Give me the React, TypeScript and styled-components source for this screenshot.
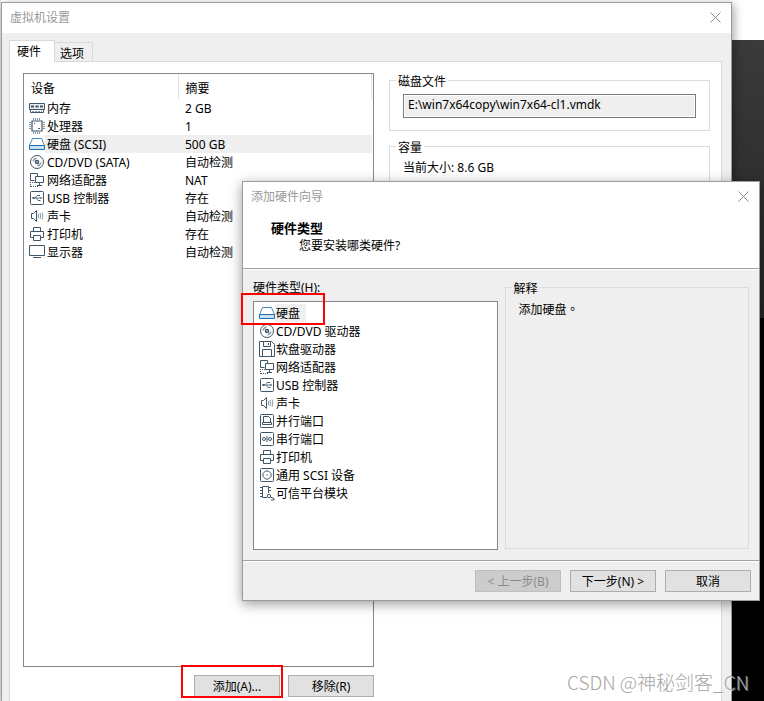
import React, { ReactNode } from "react";
import styled, { createGlobalStyle } from "styled-components";

const ink = "#3f5666";
const steel = "#8597a3";

const GlobalStyle = createGlobalStyle`
  *, *::before, *::after { box-sizing: border-box; }
  body { margin: 0; background: #fff; }
  body, button, input, table {
    font-family: "Noto Sans", "Noto Sans CJK SC", sans-serif;
    font-size: 12px;
    line-height: 18px;
    color: #000;
  }
`;

const Desktop = styled.main`
  position: relative;
  display: flex;
  min-height: 100vh;
  padding: 2px 32px 0 1px;
  overflow: hidden;
  background:
    linear-gradient(#e4e4e4, #e4e4e4) 0 0 / 1px 100% no-repeat,
    linear-gradient(#3a3a3a, #262626) 0 40px / 100% 278px no-repeat,
    linear-gradient(#fff, #fff) 0 0 / 100% 40px no-repeat,
    #000;
`;

const SettingsWindow = styled.section`
  flex: 1;
  display: flex;
  flex-direction: column;
  border: 1px solid #9c9c9c;
  border-bottom: 0;
  background: #efefef;
  box-shadow: 2px 2px 9px rgba(0, 0, 0, 0.35);
`;

const TitleBar = styled.header`
  display: flex;
  align-items: center;
  justify-content: space-between;
  height: 30px;
  padding: 0 10px 2px 8px;
  background: #fff;
  color: #999;
`;

const WindowTitle = styled.h1`
  margin: 0;
  padding-top: 2px;
  font-size: 12px;
  font-weight: 400;
`;

const CloseButton = styled.button`
  display: flex;
  padding: 0;
  border: 0;
  background: none;
  color: #8a8a8a;
`;

const SettingsBody = styled.div`
  flex: 1;
  display: flex;
  flex-direction: column;
  padding: 7px 9px 0 7px;
`;

const TabList = styled.div`
  display: flex;
  align-items: flex-end;
  height: 21px;
`;

const Tab = styled.button<{ $active?: boolean }>`
  position: relative;
  height: ${(p) => (p.$active ? 22 : 19)}px;
  margin-bottom: ${(p) => (p.$active ? -1 : 0)}px;
  padding: ${(p) => (p.$active ? "0 13px 0 7px" : "2px 8px 0 5px")};
  border: 1px solid #d9d9d9;
  border-bottom: 0;
  border-left-width: ${(p) => (p.$active ? 1 : 0)}px;
  background: ${(p) => (p.$active ? "#fff" : "#efefef")};
`;

const TabPanel = styled.div`
  flex: 1;
  display: flex;
  gap: 15px;
  padding: 11px 11px 4px 13px;
  border: 1px solid #d9d9d9;
  border-bottom: 0;
  background: #fff;
`;

const DeviceColumn = styled.div`
  display: flex;
  flex-direction: column;
  gap: 8px;
  width: 351px;
`;

const DeviceFrame = styled.div`
  flex: 1;
  padding-right: 1px;
  border: 1px solid #828790;
`;

const DeviceTable = styled.table`
  width: 100%;
  border-collapse: collapse;
  table-layout: fixed;
`;

const HeadCell = styled.th<{ $width?: number }>`
  width: ${(p) => (p.$width ? `${p.$width}px` : "auto")};
  height: 25px;
  padding: 4px 7px 0;
  border-right: 1px solid #e2e2e2;
  font-weight: 400;
  text-align: left;
`;

const Cell = styled.td<{ $selected?: boolean }>`
  height: 18px;
  padding: 2px 0 0 7px;
  line-height: 16px;
  background: ${(p) => (p.$selected ? "#efefef" : "transparent")};
`;

const NameCell = styled.td`
  height: 18px;
  padding: 0 0 0 5px;
`;

const IconLabel = styled.div`
  display: flex;
  align-items: center;
  height: 18px;
`;

const DeviceLabel = styled.span<{ $selected?: boolean }>`
  flex: 1;
  padding: 2px 0 0 2px;
  line-height: 16px;
  background: ${(p) => (p.$selected ? "#efefef" : "transparent")};
`;

const Glyph = styled.svg`
  flex: none;
  display: block;
  fill: none;
`;

const ButtonRow = styled.div`
  display: flex;
  justify-content: flex-end;
  gap: 8px;
`;

const PushButton = styled.button`
  width: 86px;
  height: 22px;
  padding: 2px 0 0;
  border: 1px solid #adadad;
  background: #e1e1e1;
  line-height: 18px;
  &:disabled {
    border-color: #bfbfbf;
    background: #ccc;
    color: #8a8a8a;
  }
`;

const MarkedArea = styled.div`
  position: relative;
  display: flex;
`;

const Highlight = styled.span<{ $left: number; $top: number; $width: number; $height: number }>`
  position: absolute;
  z-index: 2;
  left: ${(p) => p.$left}px;
  top: ${(p) => p.$top}px;
  width: ${(p) => p.$width}px;
  height: ${(p) => p.$height}px;
  border: 2px solid #f00;
  pointer-events: none;
`;

const DetailColumn = styled.div`
  flex: 1;
  display: flex;
  flex-direction: column;
  gap: 8px;
  min-width: 0;
`;

const Group = styled.fieldset<{ $height?: number }>`
  min-width: 0;
  height: ${(p) => (p.$height ? `${p.$height}px` : "auto")};
  margin: 0;
  padding: 0;
  border: 1px solid #dcdcdc;
`;

const GroupTitle = styled.legend`
  height: 15px;
  margin-left: 6px;
  padding: 0 2px;
  line-height: 17px;
`;

const GroupContent = styled.div`
  padding: 5px 13px 0;
`;

const FileInput = styled.input`
  display: block;
  width: 100%;
  height: 24px;
  margin-top: 1px;
  padding: 0 4px 3px;
  border: 1px solid #7a7a7a;
  outline: 1px solid #fff;
  outline-offset: -2px;
  border-radius: 0;
  background: #efefef;
`;

const Wizard = styled.section`
  position: absolute;
  top: 181px;
  left: 242px;
  right: 4px;
  border: 1px solid #9c9c9c;
  background: #efefef;
  box-shadow: 0 3px 12px rgba(0, 0, 0, 0.4);
`;

const WizardHeader = styled.div`
  padding: 7px 28px 13px;
  border-bottom: 1px solid #a0a0a0;
  background: #fff;
`;

const WizardHeading = styled.h2`
  margin: 0;
  font-size: 13px;
  font-weight: 700;
  line-height: 18px;
`;

const WizardHint = styled.p`
  margin: 0;
  padding-left: 28px;
`;

const WizardBody = styled.div`
  display: grid;
  grid-template-columns: 1fr 1fr;
  gap: 7px;
  padding: 9px 10px 10px;
  border-top: 1px solid #fff;
  border-bottom: 1px solid #a0a0a0;
`;

const TypeColumn = styled.div`
  display: flex;
  flex-direction: column;
  gap: 4px;
`;

const TypeList = styled.ul`
  height: 249px;
  margin: 0;
  padding: 2px 5px;
  border: 1px solid #828790;
  background: #fff;
  list-style: none;
`;

const TypeItem = styled.li`
  display: flex;
  align-items: center;
  height: 18px;
`;

const TypeLabel = styled.span<{ $selected?: boolean }>`
  padding: 2px 6px 0 1px;
  line-height: 16px;
  background: ${(p) => (p.$selected ? "#efefef" : "transparent")};
`;

const ExplainColumn = styled.div`
  display: grid;
  padding: 1px 0;
`;

const CenteredStop = styled.span`
  font-family: "Noto Sans CJK TC", sans-serif;
`;

const WizardFooter = styled.footer`
  display: flex;
  justify-content: flex-end;
  gap: 9px;
  padding: 8px;
  border-top: 1px solid #fff;
`;

const Watermark = styled.p`
  position: absolute;
  z-index: 3;
  right: 15px;
  bottom: 5px;
  margin: 0;
  font-family: "Noto Sans CJK SC", sans-serif;
  font-size: 19px;
  font-weight: 300;
  line-height: 28px;
  color: #a6a6a6;
  text-shadow: 1px 1px 0 rgba(255, 255, 255, 0.5);
`;

type IconName =
  | "memory" | "cpu" | "disk" | "disc" | "network" | "usb" | "sound" | "printer"
  | "display" | "floppy" | "parallel" | "serial" | "scsi" | "tpm";

const drawings: Record<IconName, ReactNode> = {
  memory: (
    <>
      <path d="M.5 3.5h15v6H.5z" stroke={ink} fill="#e6ebee" />
      <path d="M1.5 9.500v3h13v-3" stroke={ink} />
      <path d="M2 6.500h3M6.500 6.500h3M11 6.500h3" stroke={ink} strokeWidth="2" />
      <path d="M3 11.500h10" stroke={steel} strokeDasharray="2 1" />
    </>
  ),
  cpu: (
    <>
      <path d="M3 3h10v10H3z" stroke={ink} strokeWidth="1.200" />
      <path d="M4.500 0v2.500M6.500 0v2.500M8.500 0v2.500M10.500 0v2.500M4.500 13.500V16M6.500 13.500V16M8.500 13.500V16M10.500 13.500V16M0 4.500h2.500M0 6.500h2.500M0 8.500h2.500M0 10.500h2.500M13.500 4.500H16M13.500 6.500H16M13.500 8.500H16M13.500 10.500H16" stroke={steel} />
      <path d="M5 5.500h1M9 10.500h2" stroke={ink} />
    </>
  ),
  disk: (
    <>
      <path d="M3.500 2.500h9l3 7H.5z" stroke="#4688b8" fill="#fff" />
      <path d="M.5 9.500h15v4H.5z" stroke="#256ca5" fill="#c5e1f5" />
    </>
  ),
  disc: (
    <>
      <circle cx="8" cy="8" r="6.500" stroke={ink} />
      <circle cx="8" cy="8" r="1.500" stroke={ink} strokeWidth="1.500" />
      <path d="M4.200 7.500c.2-1.800 1.500-3.100 3.300-3.300M11.800 8.500c-.2 1.800-1.500 3.100-3.300 3.300" stroke={steel} strokeWidth="1.500" />
    </>
  ),
  network: (
    <>
      <path d="M5.500 8.500H1.500v-7h7v3" stroke={ink} />
      <path d="M6.500 4.500h8v6h-8z" stroke={ink} fill="#fff" />
      <path d="M10.500 11v2M8 13.500h5" stroke={ink} />
      <path d="M1.500 10v5M2 14.500h7M3 10.500h3" stroke={ink} strokeDasharray="1 1" />
    </>
  ),
  usb: (
    <>
      <rect x="1.500" y="1.500" width="13" height="13" rx="1" stroke={ink} />
      <path d="M4 8h8.500M6 8l2-2.500h2M7.500 8l1.500 2.500h1.500" stroke={ink} strokeWidth=".8" />
      <path d="M3.500 7h2v2h-2zM9.500 5h1.500v1H9.500zM10 10h1.500v1H10zM11.500 7l2 1-2 1z" fill={ink} />
    </>
  ),
  sound: (
    <>
      <path d="M2.500 5.500h2l3-3v11l-3-3h-2z" stroke={ink} />
      <path d="M9.500 6v4M11 5c.8 2 .8 4 0 6M13 4.500c1 2 1 5 0 7" stroke={steel} />
    </>
  ),
  printer: (
    <>
      <path d="M4.500 5.500v-4h7v4M4.500 11.500h-3v-6h13v6h-3" stroke={ink} />
      <path d="M4.500 9.500h7v5h-7z" stroke={ink} />
    </>
  ),
  display: (
    <>
      <path d="M.5 1.500h15v10H.5z" stroke={ink} />
      <path d="M4 13.500h8" stroke={ink} />
    </>
  ),
  floppy: (
    <>
      <path d="M.5.5h12l3 3v12H.5z" stroke={ink} />
      <path d="M4.500.5v5h7v-5M9.500 2v2M3.500 15V8.500h9V15" stroke={ink} />
    </>
  ),
  parallel: (
    <>
      <rect x="1.500" y="1.500" width="13" height="13" rx="1" stroke={ink} />
      <path d="M4.500 9.500v-6h5l2 2v4M3.500 9.500h9v2h-9z" stroke={ink} />
    </>
  ),
  serial: (
    <>
      <rect x="1.500" y="1.500" width="13" height="13" rx="1" stroke={ink} />
      <circle cx="5" cy="8" r="1.500" stroke={ink} />
      <circle cx="11" cy="8" r="1.500" stroke={ink} />
      <path d="M8 5v6" stroke={ink} />
    </>
  ),
  scsi: (
    <>
      <rect x="1.500" y="1.500" width="13" height="13" rx="1" stroke={ink} />
      <path d="M6.500 4h3L12 6.500v3L9.500 12h-3L4 9.500v-3z" stroke={ink} />
      <path d="M7 8h2" stroke={steel} />
    </>
  ),
  tpm: (
    <>
      <path d="M8 12.500H3.500v-11h6V8" stroke={ink} />
      <path d="M1 2.500h2M1 5.500h2M1 8.500h2M1 11.500h2M10 2.500h2M10 5.500h2" stroke={ink} />
      <circle cx="10" cy="11" r="1.700" stroke={ink} />
      <path d="M11.500 12l3.500 1.500v1.500h-3" stroke={ink} />
    </>
  ),
};

const Icon = ({ name }: { name: IconName }) => (
  <Glyph width="16" height="16" viewBox="0 0 16 16" aria-hidden="true">
    {drawings[name]}
  </Glyph>
);

const Close = () => (
  <CloseButton type="button" aria-label="关闭">
    <Glyph width="11" height="11" viewBox="0 0 11 11" aria-hidden="true">
      <path d="M.5.5l10 10M10.500.5l-10 10" stroke="currentColor" />
    </Glyph>
  </CloseButton>
);

const devices: { icon: IconName; name: string; summary: string; selected?: boolean }[] = [
  { icon: "memory", name: "内存", summary: "2 GB" },
  { icon: "cpu", name: "处理器", summary: "1" },
  { icon: "disk", name: "硬盘 (SCSI)", summary: "500 GB", selected: true },
  { icon: "disc", name: "CD/DVD (SATA)", summary: "自动检测" },
  { icon: "network", name: "网络适配器", summary: "NAT" },
  { icon: "usb", name: "USB 控制器", summary: "存在" },
  { icon: "sound", name: "声卡", summary: "自动检测" },
  { icon: "printer", name: "打印机", summary: "存在" },
  { icon: "display", name: "显示器", summary: "自动检测" },
];

const hardwareTypes: { icon: IconName; name: string; selected?: boolean }[] = [
  { icon: "disk", name: "硬盘", selected: true },
  { icon: "disc", name: "CD/DVD 驱动器" },
  { icon: "floppy", name: "软盘驱动器" },
  { icon: "network", name: "网络适配器" },
  { icon: "usb", name: "USB 控制器" },
  { icon: "sound", name: "声卡" },
  { icon: "parallel", name: "并行端口" },
  { icon: "serial", name: "串行端口" },
  { icon: "printer", name: "打印机" },
  { icon: "scsi", name: "通用 SCSI 设备" },
  { icon: "tpm", name: "可信平台模块" },
];

const AddHardwareWizard = () => (
  <Wizard role="dialog" aria-labelledby="wizard-title">
    <TitleBar>
      <WindowTitle id="wizard-title">添加硬件向导</WindowTitle>
      <Close />
    </TitleBar>
    <WizardHeader>
      <WizardHeading>硬件类型</WizardHeading>
      <WizardHint>您要安装哪类硬件?</WizardHint>
    </WizardHeader>
    <WizardBody>
      <TypeColumn>
        <span id="type-label">硬件类型(H):</span>
        <TypeList role="listbox" aria-labelledby="type-label">
          {hardwareTypes.map((t) => (
            <TypeItem key={t.name} role="option" aria-selected={!!t.selected}>
              <Icon name={t.icon} />
              <TypeLabel $selected={t.selected}>{t.name}</TypeLabel>
            </TypeItem>
          ))}
        </TypeList>
      </TypeColumn>
      <ExplainColumn>
        <Group>
          <GroupTitle>解释</GroupTitle>
          <GroupContent>
            添加硬盘<CenteredStop>。</CenteredStop>
          </GroupContent>
        </Group>
      </ExplainColumn>
    </WizardBody>
    <WizardFooter>
      <PushButton type="button" disabled>&lt; 上一步(B)</PushButton>
      <PushButton type="button">下一步(N) &gt;</PushButton>
      <PushButton type="button">取消</PushButton>
    </WizardFooter>
    <Highlight $left={-2} $top={111} $width={84} $height={32} />
  </Wizard>
);

export default function App() {
  return (
    <Desktop>
      <GlobalStyle />
      <SettingsWindow>
        <TitleBar>
          <WindowTitle>虚拟机设置</WindowTitle>
          <Close />
        </TitleBar>
        <SettingsBody>
          <TabList role="tablist">
            <Tab type="button" role="tab" aria-selected="true" $active>硬件</Tab>
            <Tab type="button" role="tab" aria-selected="false">选项</Tab>
          </TabList>
          <TabPanel role="tabpanel">
            <DeviceColumn>
              <DeviceFrame>
                <DeviceTable>
                  <thead>
                    <tr>
                      <HeadCell $width={154}>设备</HeadCell>
                      <HeadCell>摘要</HeadCell>
                    </tr>
                  </thead>
                  <tbody>
                    {devices.map((d) => (
                      <tr key={d.name}>
                        <NameCell>
                          <IconLabel>
                            <Icon name={d.icon} />
                            <DeviceLabel $selected={d.selected}>{d.name}</DeviceLabel>
                          </IconLabel>
                        </NameCell>
                        <Cell $selected={d.selected}>{d.summary}</Cell>
                      </tr>
                    ))}
                  </tbody>
                </DeviceTable>
              </DeviceFrame>
              <ButtonRow>
                <MarkedArea>
                  <PushButton type="button">添加(A)...</PushButton>
                  <Highlight $left={-13} $top={-10} $width={102} $height={33} />
                </MarkedArea>
                <PushButton type="button">移除(R)</PushButton>
              </ButtonRow>
            </DeviceColumn>
            <DetailColumn>
              <Group $height={58}>
                <GroupTitle>磁盘文件</GroupTitle>
                <GroupContent>
                  <FileInput
                    readOnly
                    aria-label="磁盘文件"
                    value={"E:\\win7x64copy\\win7x64-cl1.vmdk"}
                  />
                </GroupContent>
              </Group>
              <Group $height={140}>
                <GroupTitle>容量</GroupTitle>
                <GroupContent>当前大小: 8.6 GB</GroupContent>
              </Group>
            </DetailColumn>
          </TabPanel>
        </SettingsBody>
      </SettingsWindow>
      <AddHardwareWizard />
      <Watermark>CSDN @神秘剑客_CN</Watermark>
    </Desktop>
  );
}
